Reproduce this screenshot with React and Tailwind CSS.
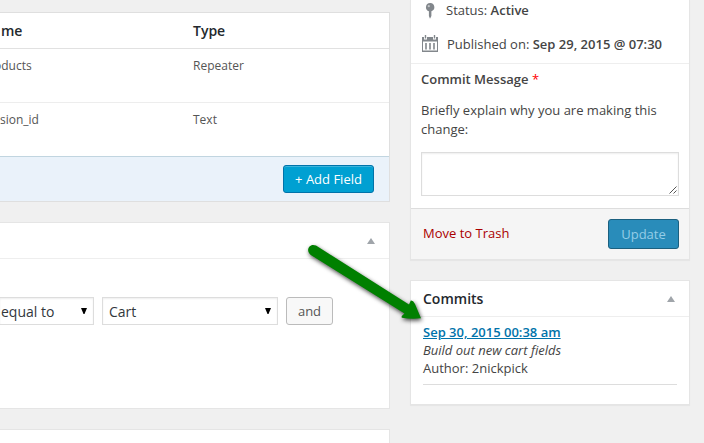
import React from "react";

function Toggle() {
  return (
    <svg width="8" height="6" viewBox="0 0 8 6" className="block">
      <path d="M4 0L8 6H0Z" fill="#a0a5aa" />
    </svg>
  );
}

function SelectBox({ label, className }) {
  return (
    <div
      className={
        "box-border flex h-7 shrink-0 items-center justify-between border border-[#ddd] bg-white text-[14px] text-[#32373c] shadow-[inset_0_1px_2px_rgba(0,0,0,0.07)] " +
        className
      }
    >
      <span className="whitespace-nowrap">{label}</span>
      <svg width="6" height="6" viewBox="0 0 6 6" className="mb-px block">
        <path d="M0 0H6L3.5 6H2.5Z" fill="#000" />
      </svg>
    </div>
  );
}

function FieldRow({ name, type, className = "" }) {
  return (
    <div className={"flex pt-[9px] text-[12px] leading-[16px] text-[#555] " + className}>
      <div className="w-[193px]">{name}</div>
      <div>{type}</div>
    </div>
  );
}

function PinIcon() {
  return (
    <svg width="10" height="16" viewBox="0 0 10 16" className="block">
      <path d="M5 0a4.2 4.2 0 0 1 1.4 8.2V13L5 15.8 3.9 13V8.2A4.2 4.2 0 0 1 5 0Z" fill="#82878c" />
      <circle cx="3.8" cy="3.2" r="1.1" fill="#c3c6c9" />
    </svg>
  );
}

function CalendarIcon() {
  return (
    <svg width="16" height="17" viewBox="0 0 16 17" className="block">
      <path
        fillRule="evenodd"
        fill="#82878c"
        d="M0 2H2V4.5H5V2H11V4.5H14V2H16V17H0ZM1 6.5V15.5H15V6.5ZM3.2 8H4.8V14.5H3.2ZM7.2 8H8.8V14.5H7.2ZM11.2 8H12.8V14.5H11.2Z"
      />
      <path d="M2.8 0H4.2V3.6H2.8ZM11.8 0H13.2V3.6H11.8Z" fill="#82878c" />
    </svg>
  );
}

export default function App() {
  return (
    <div className="relative flex h-[443px] w-[704px] gap-5 overflow-hidden bg-[#f0f0f0] font-['Open_Sans',sans-serif] text-[13px] text-[#444]">
      <main className="flex w-[390px] shrink-0 flex-col gap-5 pt-3">
        <section className="h-[190px] shrink-0 border-y border-r border-[#dfdfdf] bg-white">
          <div className="flex h-9 items-center border-b border-[#e1e1e1] text-[14px] font-semibold text-[#23282d]">
            <div className="w-[193px] pl-px">me</div>
            <div>Type</div>
          </div>
          <FieldRow
            name={<span className="-ml-[6px]">oducts</span>}
            type="Repeater"
            className="h-[54px] border-b border-[#ededed]"
          />
          <FieldRow name="sion_id" type="Text" className="h-[53px]" />
          <div className="flex h-[45px] items-start justify-end border-t border-[#c1d5e0] bg-[#eaf2fa] pt-2 pr-[15px]">
            <button className="h-7 w-[91px] rounded-[3px] border border-[#0073aa] bg-[#00a0d2] pt-px text-[13px] whitespace-nowrap text-white shadow-[inset_0_1px_0_rgba(120,200,230,0.5)]">
              + Add Field
            </button>
          </div>
        </section>

        <section className="h-[187px] shrink-0 border-y border-r border-[#e5e5e5] bg-white">
          <div className="flex h-9 items-center justify-end border-b border-[#eee] pr-[14px]">
            <Toggle />
          </div>
          <div className="flex gap-2 pt-[38px]">
            <SelectBox label="equal to" className="w-[94px] border-l-0 pr-[6px] pl-px" />
            <SelectBox label="Cart" className="w-[176px] pr-[6px] pl-[6px]" />
            <button className="h-7 w-[47px] rounded-[3px] border border-[#bbb] bg-[#f8f8f8] pt-px text-[13px] text-[#555]">
              and
            </button>
          </div>
        </section>

        <section className="h-[14px] shrink-0 border-t border-r border-[#e5e5e5] bg-white" />
      </main>

      <aside className="flex w-[280px] shrink-0 flex-col gap-5">
        <section className="h-[260px] shrink-0 border-x border-b border-[#e5e5e5] bg-white shadow-[0_1px_1px_rgba(0,0,0,0.04)]">
          <div className="flex h-[22px] items-center gap-[11px] pl-[14px]">
            <PinIcon />
            <div className="pb-[2px] leading-[18px]">
              Status: <b className="font-semibold">Active</b>
            </div>
          </div>
          <div className="flex h-[41px] items-center gap-[9px] pt-[2px] pl-[11px]">
            <CalendarIcon />
            <div className="pt-[2px] whitespace-nowrap">
              Published on: <b className="font-semibold">Sep 29, 2015 @ 07:30</b>
            </div>
          </div>
          <div className="h-[145px] border-t border-[#eee] px-[10px] pt-[6px]">
            <div className="leading-[19px] font-semibold">
              Commit Message <span className="font-normal text-[#f00]">*</span>
            </div>
            <p className="mt-3 leading-[19px]">
              Briefly explain why you are making this
              <br />
              change:
            </p>
            <div className="mt-[13px] flex h-11 w-[258px] items-end justify-end border border-[#ddd] p-px shadow-[inset_0_1px_2px_rgba(0,0,0,0.07)]">
              <svg width="8" height="8" viewBox="0 0 8 8" className="block">
                <path d="M0.5 7.5L7.5 0.5M4.5 7.5L7.5 4.5" stroke="#555" strokeWidth="1" />
              </svg>
            </div>
          </div>
          <div className="flex h-[51px] items-center justify-between border-t border-[#ddd] bg-[#f5f5f5] pr-[10px] pl-3">
            <span className="text-[#a00]">Move to Trash</span>
            <button className="h-[30px] w-[71px] rounded-[3px] border border-[#1b607f] bg-[#298cba] pt-[2px] text-[13px] text-[#94cde7]">
              Update
            </button>
          </div>
        </section>

        <section className="h-[125px] shrink-0 border border-[#e5e5e5] bg-white shadow-[0_1px_1px_rgba(0,0,0,0.04)]">
          <div className="flex h-9 items-center justify-between border-b border-[#eee] pr-[14px] pl-3">
            <h2 className="text-[14px] font-semibold text-[#23282d]">Commits</h2>
            <Toggle />
          </div>
          <div className="mx-3 h-[68px] border-b border-[#ddd] pt-[6px] leading-[18px]">
            <div className="font-semibold text-[#0073aa] underline">Sep 30, 2015 00:38 am</div>
            <div className="italic">Build out new cart fields</div>
            <div>Author: 2nickpick</div>
          </div>
        </section>
      </aside>

      {/* Callout arrow laid over both columns */}
      <svg
        width="130"
        height="90"
        viewBox="300 236 130 90"
        className="pointer-events-none absolute top-[236px] left-[300px] drop-shadow-[1px_2px_2px_rgba(0,0,0,0.7)]"
      >
        <path
          d="M316 245.6L409 304.6L410.8 300.6Q413 300.2 415 304L421 318.3Q411 319.5 402 317.7Q400.5 316.8 404.5 313.6L310.8 255C305 250.5 309.5 242.5 316 245.6Z"
          fill="#008000"
        />
      </svg>
    </div>
  );
}
